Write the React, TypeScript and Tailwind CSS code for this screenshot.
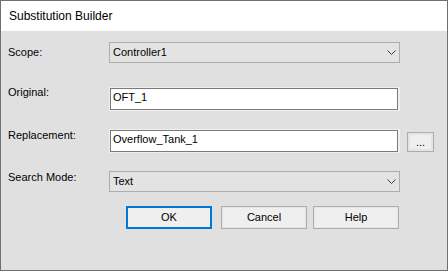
import React from "react";

const font = { fontFamily: '"Liberation Sans", Arial, sans-serif' };

function Chevron() {
  return (
    <svg width="9" height="6" viewBox="0 0 9 6" className="shrink-0">
      <polyline points="0.5,0.5 4.5,4.5 8.5,0.5" fill="none" stroke="#3c3c3c" strokeWidth="1" />
    </svg>
  );
}

function Combo({ value }: { value: string }) {
  return (
    <div className="flex h-[21px] w-[291px] items-center justify-between border border-[#adadad] bg-[#e3e3e3] pl-[3px] pr-[3px]">
      <span className="text-[11px] leading-[13px] text-black">{value}</span>
      <Chevron />
    </div>
  );
}

function TextBox({ value }: { value: string }) {
  return (
    <div className="h-[24px] w-[291px] border border-r-2 border-[#f0f0f0]">
      <div className="h-full w-full border border-[#7a7a7a] bg-white pl-[2px] pt-[2px] text-[11px] leading-[13px] text-black">
        {value}
      </div>
    </div>
  );
}

function Btn({ label, focused }: { label: string; focused?: boolean }) {
  return (
    <div
      className={
        focused
          ? "flex h-[23px] w-[86px] items-center justify-center border-2 border-[#0078d7] bg-[#efefef] text-[11px] leading-[13px] text-black"
          : "flex h-[23px] w-[86px] items-center justify-center border border-[#adadad] bg-[#efefef] shadow-[inset_0_0_0_1px_#e6e6e6] text-[11px] leading-[13px] text-black"
      }
    >
      {label}
    </div>
  );
}

export default function App() {
  return (
    <div style={font} className="flex h-[271px] w-[448px] flex-col border border-[#707070] bg-[#e0e0e0]">
      <div className="flex h-[30px] shrink-0 items-center bg-white pl-[8px] text-[12px] leading-[14px] text-black">
        Substitution Builder
      </div>
      <div className="flex flex-col pl-[7px] pt-[11px]">
        <div className="flex items-start">
          <div className="mt-[4px] w-[101px] text-[11px] leading-[13px] text-black">Scope:</div>
          <Combo value="Controller1" />
        </div>
        <div className="mt-[24px] flex items-start">
          <div className="-mt-px w-[101px] text-[11px] leading-[13px] text-black">Original:</div>
          <TextBox value="OFT_1" />
        </div>
        <div className="mt-[18px] flex items-start">
          <div className="w-[101px] text-[11px] leading-[13px] text-black">Replacement:</div>
          <TextBox value="Overflow_Tank_1" />
          <div className="ml-[7px] mt-[3px] flex h-[20px] w-[27px] items-center justify-center border border-[#adadad] bg-[#efefef] shadow-[inset_0_0_0_2px_#e4e4e4] text-[11px] leading-[13px] text-black">
            ...
          </div>
        </div>
        <div className="mt-[18px] flex items-start">
          <div className="w-[101px] text-[11px] leading-[13px] text-black">Search Mode:</div>
          <Combo value="Text" />
        </div>
        <div className="ml-[118px] mt-[14px] flex">
          <Btn label="OK" focused />
          <div className="ml-[9px]">
            <Btn label="Cancel" />
          </div>
          <div className="ml-[6px]">
            <Btn label="Help" />
          </div>
        </div>
      </div>
    </div>
  );
}
